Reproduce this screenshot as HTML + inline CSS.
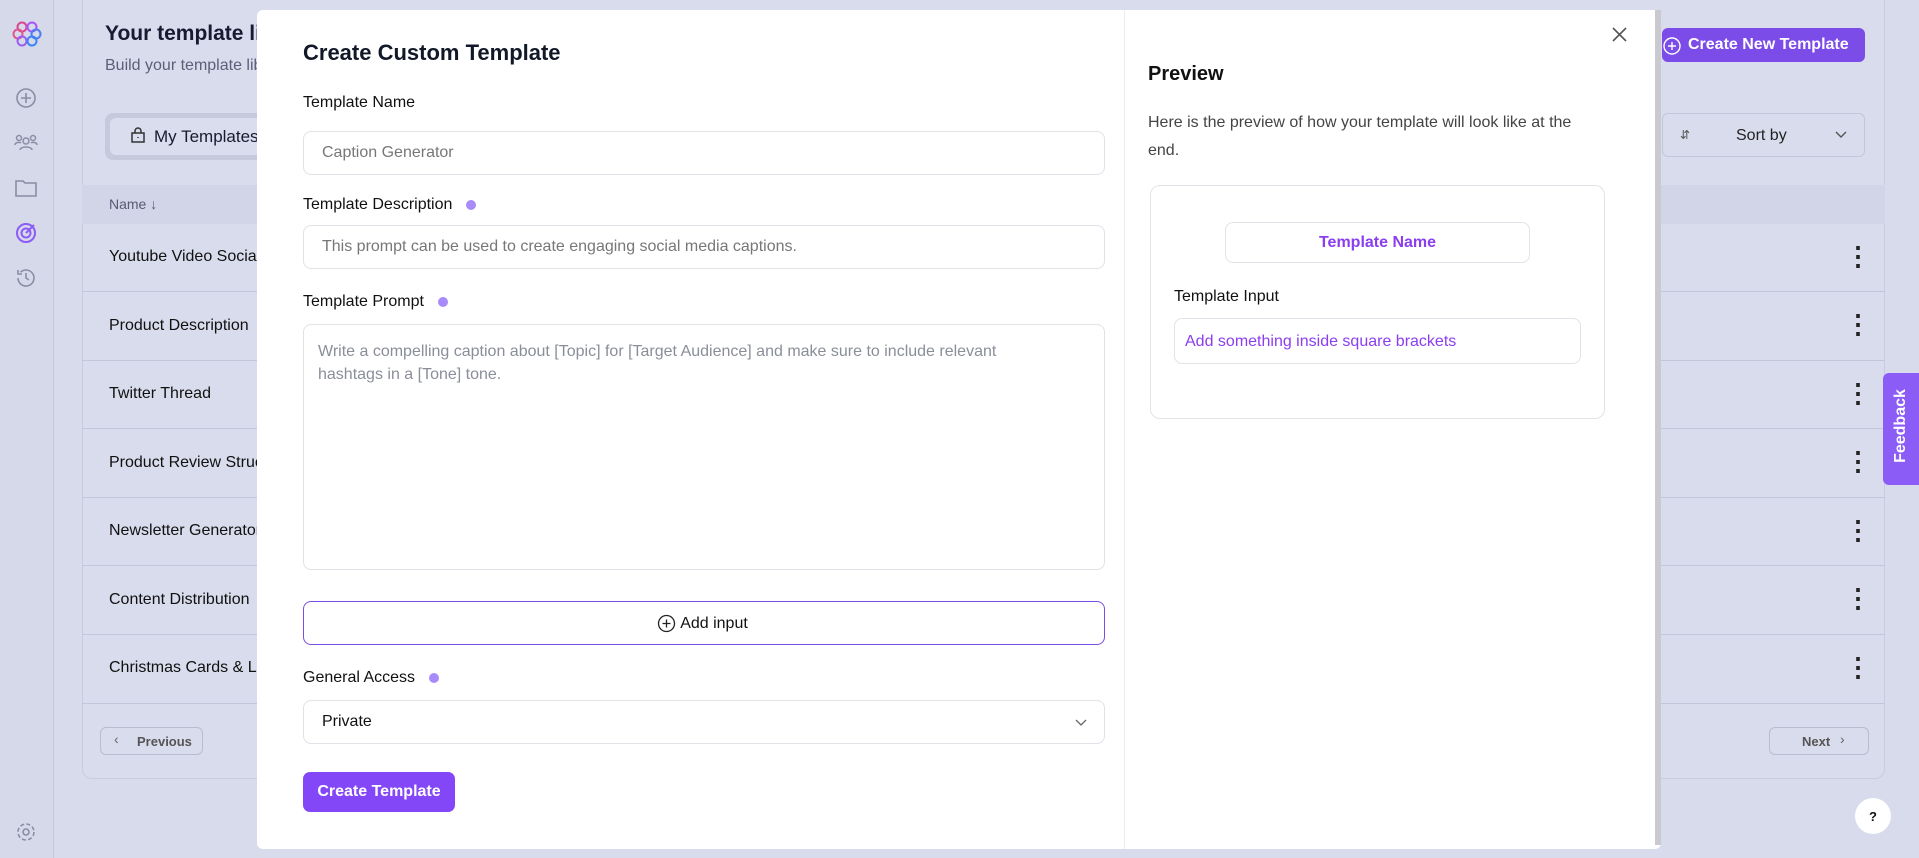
<!DOCTYPE html>
<html><head><meta charset="utf-8"><style>
*{box-sizing:border-box;margin:0;padding:0}
body{width:1919px;height:858px;overflow:hidden;background:#d8dbeb;font-family:"Liberation Sans",sans-serif;position:relative;color:#111}
.a{position:absolute}
.sb{left:0;top:0;width:54px;height:858px;background:#d6d9ea;border-right:1px solid #c6c9dc}
.main{left:82px;top:-10px;width:1803px;height:789px;background:#d9dcec;border:1px solid #c9ccdf;border-radius:10px}
.row{left:82px;width:1803px;border-top:1px solid #c3c6da;font-size:16px;color:#1a1a2e}
.dots{left:1845px;font-size:26px;color:#222;font-weight:bold;line-height:1}
.modal{left:257px;top:10px;width:1404px;height:839px;background:#fff;border-radius:6px}
.lbl{font-size:16px;color:#111}
.inp{left:303px;width:802px;border:1px solid #e1e2e8;border-radius:8px;font-size:16px;color:#777;padding-left:18px;display:flex;align-items:center}
.q{display:inline-block;width:10px;height:10px;border-radius:50%;background:#a78bfa;margin-left:14px;vertical-align:middle}
</style></head><body>
<div class="a sb"></div>
<svg class="a" style="left:12px;top:20px" width="30" height="28" viewBox="0 0 30 28"><g fill="none" stroke-width="2"><circle cx="10" cy="7" r="4.5" stroke="#d9468f"/><circle cx="20" cy="7" r="4.5" stroke="#a855f7"/><circle cx="6" cy="14" r="4.5" stroke="#e2558a"/><circle cx="24" cy="14" r="4.5" stroke="#4f7cf0"/><circle cx="10" cy="21" r="4.5" stroke="#9b5cf0"/><circle cx="20" cy="21" r="4.5" stroke="#3b82f6"/></g></svg>
<svg class="a" style="left:15px;top:87px" width="22" height="22" viewBox="0 0 22 22" fill="none" stroke="#8a8ea3" stroke-width="1.6"><circle cx="11" cy="11" r="9"/><path d="M11 6v10M6 11h10"/></svg>
<svg class="a" style="left:14px;top:133px" width="24" height="20" viewBox="0 0 24 20" fill="none" stroke="#8a8ea3" stroke-width="1.5"><circle cx="12" cy="8" r="3"/><circle cx="5" cy="5" r="2.5"/><circle cx="19" cy="5" r="2.5"/><path d="M6 17c0-4 12-4 12 0M1 12c0-3 5-3 6-2M23 12c0-3-5-3-6-2"/></svg>
<svg class="a" style="left:15px;top:179px" width="22" height="18" viewBox="0 0 22 18" fill="none" stroke="#8a8ea3" stroke-width="1.6"><path d="M1 2h7l2 2h11v13H1z"/></svg>
<svg class="a" style="left:15px;top:222px" width="22" height="22" viewBox="0 0 22 22" fill="none" stroke="#8b5cf6" stroke-width="2"><circle cx="11" cy="11" r="9"/><circle cx="11" cy="11" r="4.5"/><path d="M11 11l8-8"/></svg>
<svg class="a" style="left:15px;top:267px" width="22" height="22" viewBox="0 0 22 22" fill="none" stroke="#8a8ea3" stroke-width="1.6"><path d="M3 11a8 8 0 1 0 2.5-5.8M3 3v4h4M11 6v5l3 2"/></svg>
<svg class="a" style="left:15px;top:821px" width="22" height="22" viewBox="0 0 22 22" fill="none" stroke="#8a8ea3" stroke-width="1.6"><circle cx="11" cy="11" r="3"/><circle cx="11" cy="11" r="8" stroke-dasharray="4 2.3"/></svg>

<div class="a main"></div>
<div class="a" style="left:105px;top:22px;font-size:21px;font-weight:bold;color:#161a33">Your template library</div>
<div class="a" style="left:105px;top:57px;font-size:16px;color:#5b6078">Build your template library</div>
<div class="a" style="left:105px;top:113px;width:180px;height:47px;background:#c5c9dc;border-radius:8px"></div>
<div class="a" style="left:110px;top:118px;width:170px;height:37px;background:#dadded;border-radius:6px;font-size:17px;color:#1a1a2e;padding:9px 0 0 44px">My Templates</div>
<svg class="a" style="left:131px;top:127px" width="14" height="16" viewBox="0 0 14 16" fill="none" stroke="#333" stroke-width="1.5"><rect x="1" y="6" width="12" height="9"/><path d="M4 6V4a3 3 0 0 1 6 0v2M7 10v1"/></svg>
<div class="a" style="left:1662px;top:28px;width:203px;height:34px;background:#7c4ce8;border-radius:6px;color:#fff;font-size:16px;font-weight:bold;padding:8px 0 0 26px">Create New Template</div>
<svg class="a" style="left:1662px;top:36px" width="20" height="20" viewBox="0 0 20 20" fill="none" stroke="#fff" stroke-width="1.4"><circle cx="10" cy="10" r="8"/><path d="M10 6v8M6 10h8"/></svg>
<div class="a" style="left:1662px;top:113px;width:203px;height:44px;border:1px solid #c3c6da;border-radius:6px;font-size:16px;color:#222;padding:13px 0 0 73px">Sort by</div>
<div class="a" style="left:1680px;top:128px;font-size:12px;color:#555">⇵</div>
<svg class="a" style="left:1835px;top:131px" width="12" height="8" viewBox="0 0 12 8" fill="none" stroke="#555" stroke-width="1.4"><path d="M1 1l5 5 5-5"/></svg>
<div class="a" style="left:82px;top:185px;width:1803px;height:39px;background:#d2d5e7"></div>
<div class="a" style="left:109px;top:196px;font-size:14px;color:#555b75">Name ↓</div>
<div class="a" style="left:109px;top:248px;font-size:16px">Youtube Video Social</div>
<div class="a" style="left:109px;top:317px;font-size:16px">Product Description</div>
<div class="a" style="left:109px;top:385px;font-size:16px">Twitter Thread</div>
<div class="a" style="left:109px;top:454px;font-size:16px">Product Review Structure</div>
<div class="a" style="left:109px;top:522px;font-size:16px">Newsletter Generator</div>
<div class="a" style="left:109px;top:591px;font-size:16px">Content Distribution</div>
<div class="a" style="left:109px;top:659px;font-size:16px">Christmas Cards &amp; L</div>
<div class="a row" style="top:291px"></div><div class="a row" style="top:360px"></div><div class="a row" style="top:428px"></div><div class="a row" style="top:497px"></div><div class="a row" style="top:565px"></div><div class="a row" style="top:634px"></div><div class="a row" style="top:703px"></div>
<div class="a dots" style="top:243px">⋮</div><div class="a dots" style="top:311px">⋮</div><div class="a dots" style="top:380px">⋮</div><div class="a dots" style="top:448px">⋮</div><div class="a dots" style="top:517px">⋮</div><div class="a dots" style="top:585px">⋮</div><div class="a dots" style="top:654px">⋮</div>
<div class="a" style="left:100px;top:727px;width:103px;height:28px;border:1px solid #b9bcd0;border-radius:6px;font-size:13px;font-weight:bold;color:#555;padding:6px 0 0 36px">Previous</div>
<div class="a" style="left:114px;top:731px;font-size:14px;color:#666">‹</div>
<div class="a" style="left:1769px;top:727px;width:100px;height:28px;border:1px solid #b9bcd0;border-radius:6px;font-size:13px;font-weight:bold;color:#555;padding:6px 0 0 32px">Next</div>
<div class="a" style="left:1840px;top:731px;font-size:14px;color:#666">›</div>
<div class="a" style="left:1883px;top:373px;width:36px;height:112px;background:#8b5cf6;border-radius:6px 0 0 6px"></div>
<div class="a" style="left:1855px;top:417px;width:92px;transform:rotate(-90deg);color:#fff;font-weight:bold;font-size:16px;text-align:center">Feedback</div>
<div class="a" style="left:1855px;top:798px;width:36px;height:36px;border-radius:50%;background:#fff;text-align:center;font-size:13px;font-weight:bold;padding-top:11px">?</div>

<div class="a modal"></div>
<div class="a" style="left:1124px;top:10px;width:1px;height:839px;background:#ececf0"></div>
<div class="a" style="left:1655px;top:10px;width:6px;height:835px;background:#c9c9cf"></div>
<svg class="a" style="left:1612px;top:27px" width="15" height="15" viewBox="0 0 15 15" stroke="#555" stroke-width="1.6"><path d="M1 1l13 13M14 1L1 14"/></svg>
<div class="a" style="left:303px;top:40px;font-size:22px;font-weight:bold;color:#111827">Create Custom Template</div>
<div class="a lbl" style="left:303px;top:94px">Template Name</div>
<div class="a inp" style="top:131px;height:44px">Caption Generator</div>
<div class="a lbl" style="left:303px;top:196px">Template Description<span class="q"></span></div>
<div class="a inp" style="top:225px;height:44px">This prompt can be used to create engaging social media captions.</div>
<div class="a lbl" style="left:303px;top:293px">Template Prompt<span class="q"></span></div>
<div class="a inp" style="top:324px;height:246px;align-items:flex-start;padding:15px 60px 15px 14px;line-height:23px;color:#8a8e99">Write a compelling caption about [Topic] for [Target Audience] and make sure to include relevant hashtags in a [Tone] tone.</div>
<div class="a" style="left:303px;top:601px;width:802px;height:44px;border:1px solid #7c4ce8;border-radius:8px;font-size:16px;color:#111;text-align:center;padding-top:13px;padding-left:20px">Add input</div>
<svg class="a" style="left:657px;top:614px" width="19" height="19" viewBox="0 0 19 19" fill="none" stroke="#222" stroke-width="1.3"><circle cx="9.5" cy="9.5" r="8"/><path d="M9.5 5.5v8M5.5 9.5h8"/></svg>
<div class="a lbl" style="left:303px;top:669px">General Access<span class="q"></span></div>
<div class="a inp" style="top:700px;height:44px;color:#111">Private</div>
<svg class="a" style="left:1075px;top:719px" width="12" height="8" viewBox="0 0 12 8" fill="none" stroke="#666" stroke-width="1.3"><path d="M1 1l5 5 5-5"/></svg>
<div class="a" style="left:303px;top:772px;width:152px;height:40px;background:#8447f7;border-radius:7px;color:#fff;font-weight:bold;font-size:16px;text-align:center;padding-top:11px">Create Template</div>

<div class="a" style="left:1148px;top:63px;font-size:20px;font-weight:bold;color:#111">Preview</div>
<div class="a" style="left:1148px;top:109px;width:430px;font-size:16px;line-height:28px;color:#444">Here is the preview of how your template will look like at the end.</div>
<div class="a" style="left:1150px;top:185px;width:455px;height:234px;border:1px solid #e2e3e8;border-radius:10px"></div>
<div class="a" style="left:1225px;top:222px;width:305px;height:41px;border:1px solid #e2e3e8;border-radius:8px;color:#8b3df0;font-weight:bold;font-size:16px;text-align:center;padding-top:11px">Template Name</div>
<div class="a lbl" style="left:1174px;top:288px">Template Input</div>
<div class="a" style="left:1174px;top:318px;width:407px;height:46px;border:1px solid #e2e3e8;border-radius:8px;color:#8b3df0;font-size:16px;padding:14px 0 0 10px">Add something inside square brackets</div>
</body></html>
